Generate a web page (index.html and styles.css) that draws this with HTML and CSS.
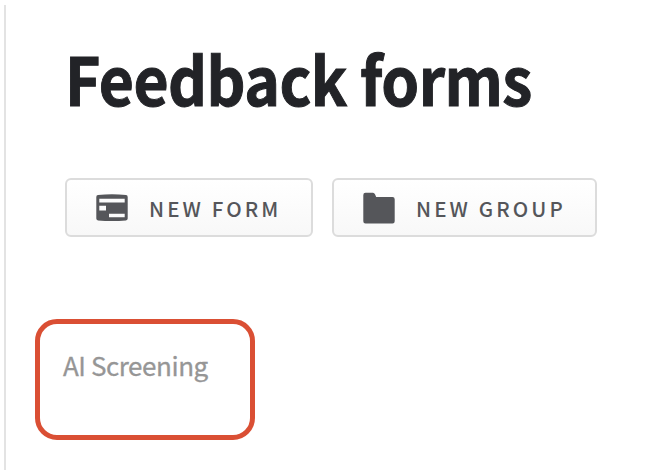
FILE: index.html
```html
<!DOCTYPE html>
<html lang="en">
<head>
    <meta charset="UTF-8">
    <meta name="viewport" content="width=device-width, initial-scale=1.0">
    <title>Feedback forms</title>
    <link rel="stylesheet" href="styles.css">
</head>
<body>
    <main class="content">
        <h1 class="title">Feedback forms</h1>

        <!-- Actions -->
        <div class="actions">
            <button class="btn" type="button">
                <svg class="icon" width="32" height="32" viewBox="0 0 32 32">
                    <path fill="#55565a" fill-rule="evenodd" d="M2 3Q16 1.600 30 3Q31.700 3.200 31.700 5V26.500Q31.700 28.200 30 28.400Q16 29.800 2 28.400Q.3 28.200 .3 26.500V5Q.3 3.200 2 3ZM3.300 6.800V10.500H28.700V6.800ZM3.300 13.800V18.500H10V13.800ZM13 21.800V25.300H28.700V21.800Z"/>
                </svg>
                <span class="label">NEW FORM</span>
            </button>
            <button class="btn" type="button">
                <svg class="icon" width="32" height="32" viewBox="0 0 32 32">
                    <path fill="#55565a" d="M2.500.8H10Q11.300.8 12 2.300L13.200 5.100H29.500Q31.700 5.100 31.700 7.300V29.300Q31.700 31.600 29.500 31.600H2.500Q.3 31.600.3 29.300V3Q.3.8 2.500.8Z"/>
                </svg>
                <span class="label">NEW GROUP</span>
            </button>
        </div>

        <!-- Form group -->
        <div class="group">
            <span class="group-name">AI Screening</span>
        </div>
    </main>
</body>
</html>
```
FILE: styles.css
```css
body {
    margin: 0;
    padding: 5px 0 0 4px;
    background-color: #fff;
    font-family: "Noto Sans CJK SC", "Open Sans", sans-serif;
    overflow: hidden;
}

.content {
    box-sizing: border-box;
    height: 465px;
    border-left: 2px solid #e3e3e3;
}

.title {
    margin: 0 0 0 59px;
    padding: 24px 0 4px;
    font-size: 66px;
    font-weight: 700;
    line-height: 96px;
    letter-spacing: -0.6px;
    color: #222327;
    white-space: nowrap;
    /* condensed and slightly heavier */
    transform: scaleX(0.918);
    transform-origin: left;
    -webkit-text-stroke: 1px #222327;
}

.actions {
    display: flex;
    gap: 19px;
    margin: 49px 0 0 59px;
}

.btn {
    display: flex;
    align-items: center;
    gap: 21px;
    box-sizing: border-box;
    width: 248px;
    height: 59px;
    padding: 0 0 0 29px;
    border: 2px solid #dcdcdc;
    border-radius: 6px;
    background: linear-gradient(#fff, #f8f8f8);
    font-family: inherit;
    color: #55565a;
}

.btn + .btn {
    width: 265px;
}

.icon {
    flex: none;
}

.label {
    font-size: 20.5px;
    font-weight: 500;
    line-height: 30px;
    letter-spacing: 3.1px;
    white-space: nowrap;
}

.group {
    box-sizing: border-box;
    width: 220px;
    height: 121px;
    margin: 82px 0 0 29px;
    padding: 22px 0 0 23px;
    border: 5px solid #da4f34;
    border-radius: 22px;
}

.group-name {
    display: block;
    font-size: 26px;
    line-height: 38px;
    letter-spacing: -0.45px;
    color: #969696;
    white-space: nowrap;
    -webkit-text-stroke: 0.3px #969696;
}
```
